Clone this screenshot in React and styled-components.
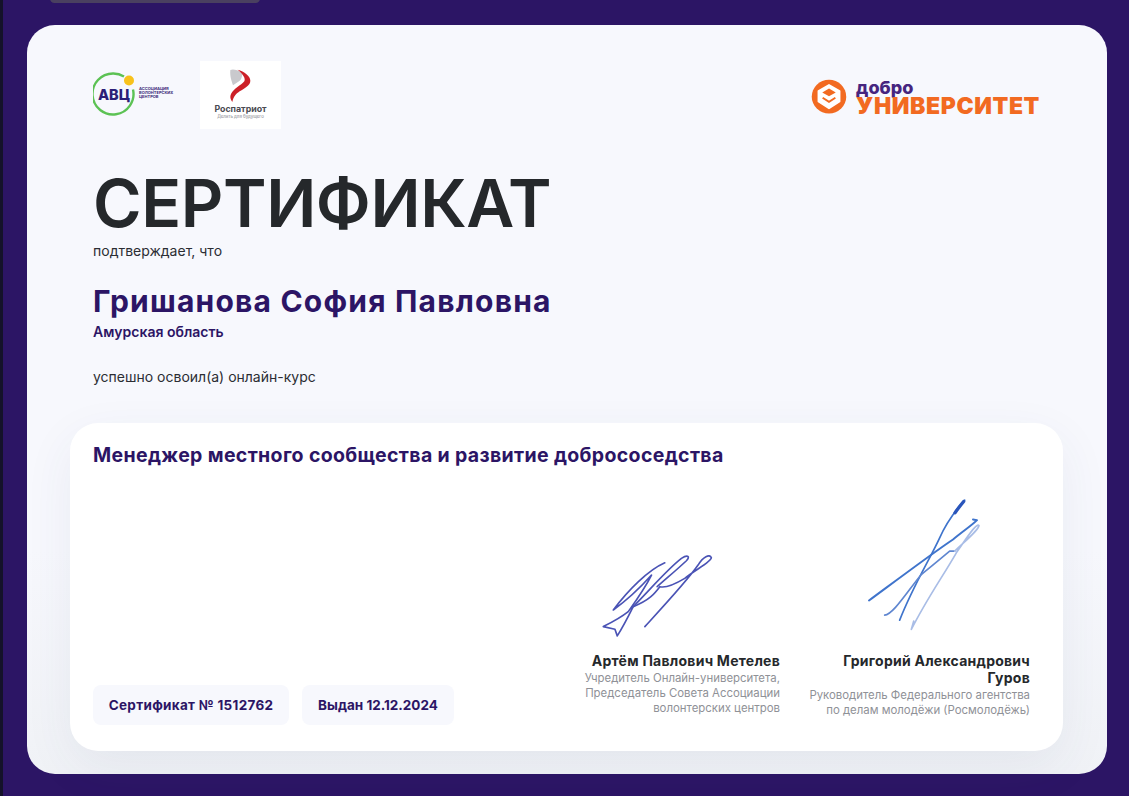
import React from 'react';
import styled, { createGlobalStyle } from 'styled-components';

const GlobalStyle = createGlobalStyle`
  html, body {
    margin: 0;
    padding: 0;
    background: #2c1565;
  }
  * { box-sizing: border-box; }
`;

const Page = styled.div`
  position: relative;
  width: 1129px;
  height: 796px;
  padding: 25px 22px 22px 27px;
  background: #2c1565;
  font-family: Inter, "Open Sans", sans-serif;
  overflow: hidden;
`;

const LeftEdge = styled.div`
  position: absolute;
  left: 0;
  top: 0;
  bottom: 0;
  width: 3px;
  background: #14122a;
`;

const TopTab = styled.div`
  position: absolute;
  left: 50px;
  top: -6px;
  width: 210px;
  height: 9px;
  border-radius: 8px;
  background: #4a4060;
`;

const Card = styled.main`
  height: 749px;
  padding: 36px 44px 23px 43px;
  border-radius: 28px;
  background: linear-gradient(180deg, #f7f8fd 0%, #f7f8fd 70%, #f0f2f6 100%);
  display: flex;
  flex-direction: column;
`;

const Intro = styled.div`
  padding-left: 23px;
`;

const LogoRow = styled.header`
  display: flex;
  justify-content: space-between;
  padding-right: 23px;
  height: 68px;
`;

const LogoGroup = styled.div`
  display: flex;
  align-items: center;
  gap: 23px;
`;

const PartnerTile = styled.div`
  width: 81px;
  height: 68px;
  background: #fff;
  display: flex;
  flex-direction: column;
  align-items: center;
  padding-top: 7px;
`;

const PartnerName = styled.div`
  font-size: 8.8px;
  line-height: 10px;
  font-weight: 700;
  color: #4a4a52;
`;

const PartnerTagline = styled.div`
  font-size: 4.4px;
  line-height: 6px;
  color: #85858d;
`;

const BrandLogo = styled.div`
  display: flex;
  align-items: center;
  gap: 9px;
  height: 72px;
`;

const BrandWords = styled.div`
  display: flex;
  flex-direction: column;
`;

const BrandTop = styled.div`
  font-size: 18px;
  line-height: 17px;
  font-weight: 800;
  color: #46257f;
`;

const BrandBottom = styled.div`
  font-size: 23px;
  line-height: 20px;
  font-weight: 900;
  letter-spacing: 0.6px;
  color: #f26a21;
`;

const Title = styled.h1`
  margin: 39px 0 0;
  font-size: 66px;
  line-height: 70px;
  font-weight: 600;
  letter-spacing: -0.4px;
  color: #25282b;
`;

const Note = styled.p`
  margin: ${(props) => props.$top}px 0 0;
  font-size: 14px;
  line-height: 16px;
  color: #2b2d33;
`;

const PersonName = styled.h2`
  margin: 25px 0 0;
  font-size: 30px;
  line-height: 34px;
  font-weight: 700;
  letter-spacing: 1.2px;
  color: #2c1565;
`;

const Region = styled.div`
  margin-top: 6px;
  font-size: 14px;
  line-height: 16px;
  font-weight: 600;
  color: #2c1565;
`;

const Panel = styled.section`
  margin-top: auto;
  height: 328px;
  padding: 20px 33px 26px 23px;
  border-radius: 28px;
  background: #fff;
  box-shadow: 0 16px 50px rgba(60, 70, 110, 0.07);
  display: flex;
  flex-direction: column;
  justify-content: space-between;
`;

const CourseTitle = styled.h3`
  margin: 0;
  font-size: 19.5px;
  line-height: 24px;
  font-weight: 700;
  letter-spacing: 0.35px;
  color: #2c1565;
`;

const PanelBottom = styled.div`
  display: flex;
  justify-content: space-between;
  align-items: flex-end;
`;

const Badges = styled.div`
  display: flex;
  gap: 13px;
`;

const Badge = styled.div`
  width: ${(props) => props.$width}px;
  height: 40px;
  border-radius: 8px;
  background: #f7f8fd;
  display: flex;
  align-items: center;
  justify-content: center;
  font-size: 13.5px;
  font-weight: 700;
  letter-spacing: ${(props) => props.$tracking || 0}px;
  color: #2c1565;
`;

const Signers = styled.div`
  display: flex;
  gap: 28px;
  align-items: flex-end;
  padding-bottom: 7px;
`;

const Signer = styled.div`
  width: ${(props) => props.$width}px;
  padding-bottom: ${(props) => props.$drop || 0}px;
  text-align: right;
  display: flex;
  flex-direction: column;
  align-items: flex-end;
`;

const Signature = styled.svg`
  display: block;
  margin-right: ${(props) => props.$right}px;
  margin-bottom: ${(props) => props.$bottom}px;
  fill: none;
  stroke-linecap: round;
  stroke-linejoin: round;
`;

const SignerName = styled.div`
  font-size: 14px;
  line-height: 17px;
  font-weight: 700;
  letter-spacing: 0.25px;
  color: #25282b;
`;

const SignerRole = styled.div`
  margin-top: 2px;
  font-size: 11.4px;
  line-height: 15px;
  color: #8f9197;
`;

const AvcLogo = () => (
  <svg width="84" height="46" viewBox="0 1.5 84 46">
    <path d="M 20 3 A 20.5 20.5 0 1 0 40 19" fill="none" stroke="#5cc254" strokeWidth="2.4" />
    <path d="M 20 3 A 20.5 20.5 0 0 1 31 6" fill="none" stroke="#5cc254" strokeWidth="2.4" />
    <circle cx="36" cy="10" r="5" fill="#f8c21c" />
    <rect x="3" y="17" width="34" height="15" fill="#f7f8fd" />
    <text x="21" y="29.5" textAnchor="middle" fontFamily="Inter, sans-serif" fontSize="14.5" fontWeight="800" fill="#2c1f78">АВЦ</text>
    <text fontFamily="Inter, sans-serif" fontSize="4" fontWeight="700" fill="#3b2a78">
      <tspan x="46" y="19">АССОЦИАЦИЯ</tspan>
      <tspan x="46" y="23">ВОЛОНТЕРСКИХ</tspan>
      <tspan x="46" y="27">ЦЕНТРОВ</tspan>
    </text>
  </svg>
);

const PartnerMark = () => (
  <svg width="24" height="36" viewBox="24 10 72 108">
    <path d="M28 16 C36 12 50 16 62 24 C66 34 60 46 54 50 L36 62 C32 50 26 34 28 16 Z" fill="#c9c9cd" />
    <path d="M50 15 C70 20 88 34 88 48 C88 62 72 70 56 80 C46 87 38 94 34 112 C28 104 26 96 30 88 C38 72 60 62 70 50 C74 42 68 30 50 15 Z" fill="#cc2028" />
  </svg>
);

const BrandMark = () => (
  <svg width="36" height="36" viewBox="14 12 96 96">
    <ellipse cx="62" cy="59" rx="46" ry="45" fill="#f26a21" />
    <path d="M62 28 L90 44 L90 72 L62 90 L34 72 L34 44 Z" fill="#fff" stroke="#fff" strokeWidth="5" strokeLinejoin="round" />
    <path d="M62 37 L80 48 L62 58 L44 48 Z" fill="#f26a21" />
    <path d="M45 62 L62 73 L79 62" fill="none" stroke="#f26a21" strokeWidth="5" />
  </svg>
);

export default function App() {
  return (
    <>
      <GlobalStyle />
      <Page>
        <LeftEdge />
        <TopTab />
        <Card>
          <Intro>
            <LogoRow>
              <LogoGroup>
                <AvcLogo />
                <PartnerTile>
                  <PartnerMark />
                  <PartnerName>Роспатриот</PartnerName>
                  <PartnerTagline>Делать для будущего</PartnerTagline>
                </PartnerTile>
              </LogoGroup>
              <BrandLogo>
                <BrandMark />
                <BrandWords>
                  <BrandTop>добро</BrandTop>
                  <BrandBottom>УНИВЕРСИТЕТ</BrandBottom>
                </BrandWords>
              </BrandLogo>
            </LogoRow>
            <Title>СЕРТИФИКАТ</Title>
            <Note $top={5}>подтверждает, что</Note>
            <PersonName>Гришанова София Павловна</PersonName>
            <Region>Амурская область</Region>
            <Note $top={29}>успешно освоил(а) онлайн-курс</Note>
          </Intro>
          <Panel>
            <CourseTitle>Менеджер местного сообщества и развитие добрососедства</CourseTitle>
            <PanelBottom>
              <Badges>
                <Badge $width={196} $tracking={0.3}>Сертификат № 1512762</Badge>
                <Badge $width={152}>Выдан 12.12.2024</Badge>
              </Badges>
              <Signers>
                <Signer $width={200} $drop={2}>
                  <Signature $right={57} $bottom={12} width="133" height="90" viewBox="60 180 400 270" stroke="#4a53b5" strokeWidth="5">
                    <path d="M285 218 C235 240 175 300 130 360 C165 335 205 300 245 255 C225 295 200 330 175 365 C150 385 120 400 100 410 L135 418 L142 438 C160 410 175 380 190 350 C240 330 255 310 270 290 C290 295 320 280 345 265 C375 240 425 215 425 203 C420 190 400 200 385 225 C350 275 280 350 225 410" />
                    <path d="M190 350 C240 300 290 240 335 205 C355 192 362 200 350 212 C320 240 290 265 262 290" />
                  </Signature>
                  <SignerName>Артём Павлович Метелев</SignerName>
                  <SignerRole>
                    Учредитель Онлайн-университета,
                    <br />
                    Председатель Совета Ассоциации
                    <br />
                    волонтерских центров
                  </SignerRole>
                </Signer>
                <Signer $width={222}>
                  <Signature $right={47} $bottom={19} width="120" height="137" viewBox="70 20 360 410" strokeWidth="5">
                    <path d="M375 32 C350 60 320 100 300 145 C270 210 220 290 180 392" stroke="#3f74cc" />
                    <path d="M372 36 C362 48 354 58 346 70" stroke="#2a55bb" strokeWidth="10" />
                    <path d="M88 333 C160 280 280 190 340 150 C370 125 400 105 412 92 L400 90" stroke="#3f74cc" strokeWidth="6" />
                    <path d="M135 377 C160 375 200 310 245 255 C270 235 300 210 330 185 L345 185" stroke="#5f86d0" />
                    <path d="M345 185 C375 155 415 125 418 108 C410 100 385 140 350 190 C310 260 260 330 215 420 L222 395" stroke="#a9bde6" />
                  </Signature>
                  <SignerName>Григорий Александрович Гуров</SignerName>
                  <SignerRole>
                    Руководитель Федерального агентства
                    <br />
                    по делам молодёжи (Росмолодёжь)
                  </SignerRole>
                </Signer>
              </Signers>
            </PanelBottom>
          </Panel>
        </Card>
      </Page>
    </>
  );
}
